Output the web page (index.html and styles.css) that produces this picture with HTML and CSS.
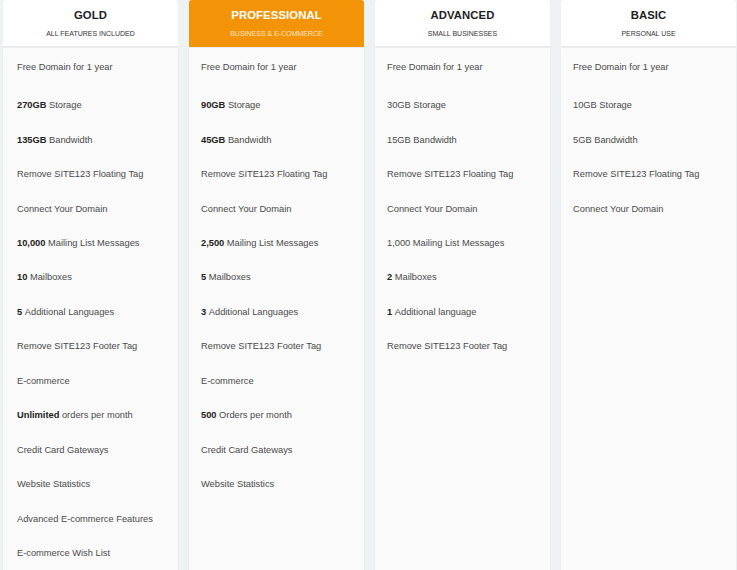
FILE: index.html
```html
<!DOCTYPE html>
<html>
<head>
<meta charset="utf-8">
<link rel="stylesheet" href="styles.css">
</head>
<body>
<div class="plans">
  <div class="plan">
    <div class="head">
      <div class="title">GOLD</div>
      <div class="sub">ALL FEATURES INCLUDED</div>
    </div>
    <ul class="features">
      <li>Free Domain for 1 year</li>
      <li><b>270GB</b> Storage</li>
      <li><b>135GB</b> Bandwidth</li>
      <li>Remove SITE123 Floating Tag</li>
      <li>Connect Your Domain</li>
      <li><b>10,000</b> Mailing List Messages</li>
      <li><b>10</b> Mailboxes</li>
      <li><b>5</b> Additional Languages</li>
      <li>Remove SITE123 Footer Tag</li>
      <li>E-commerce</li>
      <li><b>Unlimited</b> orders per month</li>
      <li>Credit Card Gateways</li>
      <li>Website Statistics</li>
      <li>Advanced E-commerce Features</li>
      <li>E-commerce Wish List</li>
    </ul>
  </div>
  <div class="plan featured">
    <div class="head">
      <div class="title">PROFESSIONAL</div>
      <div class="sub">BUSINESS &amp; E-COMMERCE</div>
    </div>
    <ul class="features">
      <li>Free Domain for 1 year</li>
      <li><b>90GB</b> Storage</li>
      <li><b>45GB</b> Bandwidth</li>
      <li>Remove SITE123 Floating Tag</li>
      <li>Connect Your Domain</li>
      <li><b>2,500</b> Mailing List Messages</li>
      <li><b>5</b> Mailboxes</li>
      <li><b>3</b> Additional Languages</li>
      <li>Remove SITE123 Footer Tag</li>
      <li>E-commerce</li>
      <li><b>500</b> Orders per month</li>
      <li>Credit Card Gateways</li>
      <li>Website Statistics</li>
    </ul>
  </div>
  <div class="plan">
    <div class="head">
      <div class="title">ADVANCED</div>
      <div class="sub">SMALL BUSINESSES</div>
    </div>
    <ul class="features">
      <li>Free Domain for 1 year</li>
      <li>30GB Storage</li>
      <li>15GB Bandwidth</li>
      <li>Remove SITE123 Floating Tag</li>
      <li>Connect Your Domain</li>
      <li>1,000 Mailing List Messages</li>
      <li><b>2</b> Mailboxes</li>
      <li><b>1</b> Additional language</li>
      <li>Remove SITE123 Footer Tag</li>
    </ul>
  </div>
  <div class="plan">
    <div class="head">
      <div class="title">BASIC</div>
      <div class="sub">PERSONAL USE</div>
    </div>
    <ul class="features">
      <li>Free Domain for 1 year</li>
      <li>10GB Storage</li>
      <li>5GB Bandwidth</li>
      <li>Remove SITE123 Floating Tag</li>
      <li>Connect Your Domain</li>
    </ul>
  </div>
</div>
</body>
</html>
```

FILE: styles.css
```css
html, body {
  margin: 0;
  padding: 0;
  background: #eef2f3;
  font-family: "Liberation Sans", Arial, sans-serif;
  overflow: hidden;
}

.plans {
  display: grid;
  grid-template-columns: repeat(4, 1fr);
  column-gap: 11px;
  padding: 0 1px 0 3px;
  height: 570px;
  box-sizing: border-box;
}

.plan {
  display: flex;
  flex-direction: column;
  min-height: 600px;
}

.head {
  height: 46px;
  background: #ffffff;
  border-radius: 3px 3px 0 0;
  border-bottom: 1px solid #e6e9ea;
  display: flex;
  flex-direction: column;
  align-items: center;
  box-shadow: 0 0 1px rgba(0,0,0,0.04);
}

.title {
  margin-top: 9px;
  font-size: 11.3px;
  font-weight: bold;
  color: #1e1e1e;
  line-height: 13px;
  letter-spacing: 0.1px;
}

.sub {
  margin-top: 7px;
  font-size: 7px;
  line-height: 9px;
  color: #333;
}

.featured .head {
  background: #f39408;
  border-bottom-color: #f39408;
}

.featured .title {
  color: #ffffff;
}

.featured .sub {
  color: #fde3c2;
}

.features {
  flex: 1;
  list-style: none;
  margin: 1px 0 0 0;
  padding: 0 0 0 12px;
  background: #fafafa;
  box-shadow: 0 0 2px rgba(0,0,0,0.05);
}

.plan:first-child .features {
  padding-left: 14px;
}

.features li {
  height: 34.46px;
  display: flex;
  align-items: center;
  font-size: 9.3px;
  color: #4a4a4a;
  white-space: nowrap;
}

.features li:first-child {
  height: 38px;
  padding-bottom: 2px;
}

.features b {
  color: #222;
  font-weight: bold;
  margin-right: 0.28em;
}
```
